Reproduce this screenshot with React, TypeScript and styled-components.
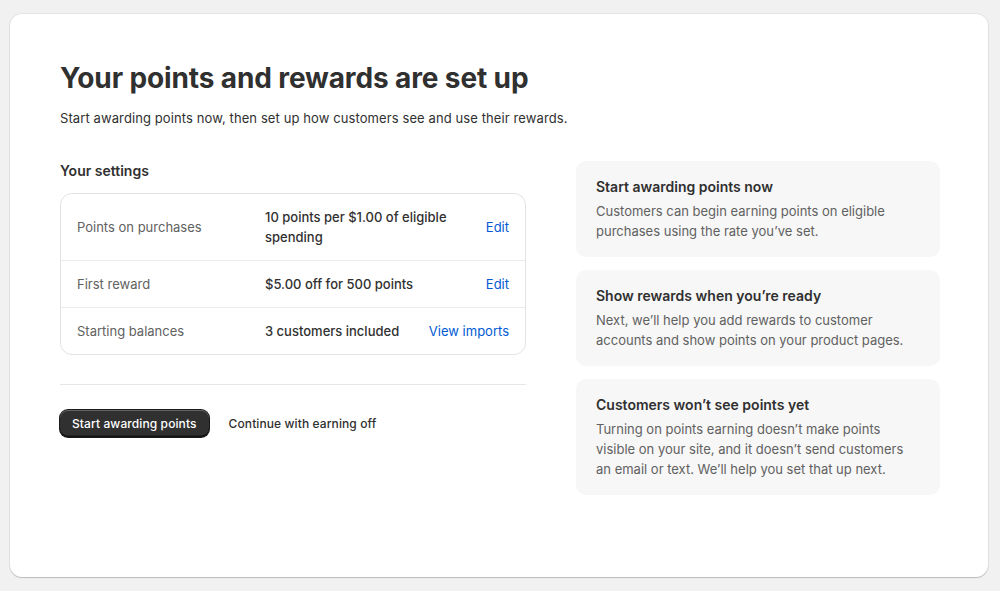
import React from "react";
import styled, { createGlobalStyle } from "styled-components";

const Global = createGlobalStyle`
  * { box-sizing: border-box; }
  html, body { margin: 0; padding: 0; background: #f1f1f1; }
  body {
    font-family: Inter, "Noto Sans", "Liberation Sans", sans-serif;
    color: #303030;
    -webkit-font-smoothing: antialiased;
  }
`;

const Page = styled.div`
  padding: 14px 12px 14px 10px;
`;

const Card = styled.main`
  background: #ffffff;
  border-radius: 12px;
  height: 563px;
  padding: 46px 48px 0 50px;
  box-shadow: 0 0 0 1px rgba(0, 0, 0, 0.05), 0 1px 1px rgba(0, 0, 0, 0.18);
`;

const Title = styled.h1`
  margin: 0;
  font-size: 28px;
  line-height: 36px;
  font-weight: 700;
  letter-spacing: -0.12px;
  color: #303030;
`;

const Subtitle = styled.p`
  margin: 12px 0 0;
  font-size: 13px;
  line-height: 20px;
  letter-spacing: 0.1px;
  color: #303030;
`;

const Columns = styled.div`
  display: grid;
  grid-template-columns: 466px 364px;
  column-gap: 50px;
  margin-top: 33px;
  align-items: start;
`;

const LeftCol = styled.section`
  display: flex;
  flex-direction: column;
`;

const SectionTitle = styled.h2`
  margin: 0;
  font-size: 14px;
  line-height: 20px;
  font-weight: 600;
  color: #303030;
`;

const SettingsBox = styled.div`
  margin-top: 12px;
  border: 1px solid #e3e3e3;
  border-radius: 12px;
  overflow: hidden;
`;

const Row = styled.div`
  display: flex;
  align-items: center;
  gap: 16px;
  padding: 13px 16px;
  font-size: 13px;
  line-height: 20px;
  & + & {
    border-top: 1px solid #ebebeb;
  }
`;

const Label = styled.div`
  width: 172px;
  flex: none;
  color: #616161;
`;

const Value = styled.div`
  flex: 1;
  font-weight: 500;
  color: #303030;
`;

const Action = styled.a`
  flex: none;
  color: #005bd3;
  text-decoration: none;
  cursor: pointer;
`;

const Divider = styled.hr`
  margin: 29px 0 0;
  border: none;
  border-top: 1.5px solid #e6e6e6;
`;

const Buttons = styled.div`
  display: flex;
  align-items: center;
  gap: 8px;
  margin-top: 25px;
`;

const PrimaryButton = styled.button`
  font-family: inherit;
  font-size: 12px;
  line-height: 16px;
  font-weight: 500;
  letter-spacing: 0.1px;
  color: #ffffff;
  background: #303030;
  border: none;
  border-radius: 8px;
  padding: 6px 12px 5px;
  box-shadow: 0 0 0 1px #1a1a1a, inset 0 1px 0 rgba(255, 255, 255, 0.25),
    inset 0 -1.5px 0 rgba(0, 0, 0, 0.6);
  cursor: pointer;
`;

const PlainButton = styled.button`
  font-family: inherit;
  font-size: 12px;
  line-height: 16px;
  font-weight: 500;
  letter-spacing: 0.1px;
  color: #303030;
  background: transparent;
  border: none;
  padding: 6px 12px 5px;
  cursor: pointer;
`;

const RightCol = styled.aside`
  display: flex;
  flex-direction: column;
  gap: 13px;
`;

const InfoCard = styled.div`
  background: #f7f7f7;
  border-radius: 10px;
  padding: 16px 20px;
  display: flex;
  flex-direction: column;
  gap: 4px;
`;

const InfoTitle = styled.h3`
  margin: 0;
  font-size: 14px;
  line-height: 20px;
  font-weight: 600;
  color: #303030;
`;

const InfoText = styled.p`
  margin: 0;
  font-size: 13px;
  line-height: 20px;
  color: #616161;
`;

const settings = [
  { label: "Points on purchases", value: "10 points per $1.00 of eligible spending", action: "Edit" },
  { label: "First reward", value: "$5.00 off for 500 points", action: "Edit" },
  { label: "Starting balances", value: "3 customers included", action: "View imports" },
];

const info = [
  {
    title: "Start awarding points now",
    text: "Customers can begin earning points on eligible purchases using the rate you\u2019ve set.",
  },
  {
    title: "Show rewards when you\u2019re ready",
    text: "Next, we\u2019ll help you add rewards to customer accounts and show points on your product pages.",
  },
  {
    title: "Customers won\u2019t see points yet",
    text: "Turning on points earning doesn\u2019t make points visible on your site, and it doesn\u2019t send customers an email or text. We\u2019ll help you set that up next.",
  },
];

export default function App() {
  return (
    <>
      <Global />
      <Page>
        <Card>
          <Title>Your points and rewards are set up</Title>
          <Subtitle>Start awarding points now, then set up how customers see and use their rewards.</Subtitle>
          <Columns>
            <LeftCol>
              <SectionTitle>Your settings</SectionTitle>
              <SettingsBox>
                {settings.map((s) => (
                  <Row key={s.label}>
                    <Label>{s.label}</Label>
                    <Value>{s.value}</Value>
                    <Action>{s.action}</Action>
                  </Row>
                ))}
              </SettingsBox>
              <Divider />
              <Buttons>
                <PrimaryButton>Start awarding points</PrimaryButton>
                <PlainButton>Continue with earning off</PlainButton>
              </Buttons>
            </LeftCol>
            <RightCol>
              {info.map((i) => (
                <InfoCard key={i.title}>
                  <InfoTitle>{i.title}</InfoTitle>
                  <InfoText>{i.text}</InfoText>
                </InfoCard>
              ))}
            </RightCol>
          </Columns>
        </Card>
      </Page>
    </>
  );
}
